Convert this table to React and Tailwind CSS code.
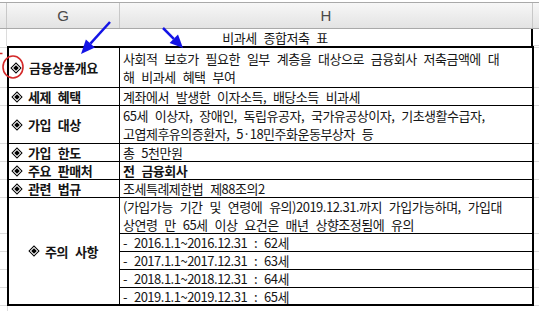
// Excel-style sheet: 비과세 종합저축 표
const GRID = 'border-[#dcdcdc]';

const rows = [
    { label: '금융상품개요', tight: true, h: 'h-[40px]', lines: ['사회적 보호가 필요한 일부 계층을 대상으로 금융회사 저축금액에 대', '해 비과세 혜택 부여'] },
    { label: '세제 혜택', h: 'h-[18px]', lines: ['계좌에서 발생한 이자소득, 배당소득 비과세'] },
    { label: '가입 대상', h: 'h-[38px]', lines: ['65세 이상자, 장애인, 독립유공자, 국가유공상이자, 기초생활수급자,', '고엽제후유의증환자, 5·18민주화운동부상자 등'] },
    { label: '가입 한도', h: 'h-[18px]', lines: ['총 5천만원'] },
    { label: '주요 판매처', h: 'h-[18px]', lines: ['전 금융회사'], bold: true },
    { label: '관련 법규', h: 'h-[18px]', lines: ['조세특례제한법 제88조의2'] },
];

const notes = [
    '- 2016.1.1~2016.12.31 : 62세',
    '- 2017.1.1~2017.12.31 : 63세',
    '- 2018.1.1~2018.12.31 : 64세',
    '- 2019.1.1~2019.12.31 : 65세',
];

const stripHeights = ['h-[2px]', 'h-[40px]', 'h-[18px]', 'h-[38px]', 'h-[18px]', 'h-[18px]', 'h-[18px]', 'h-[36px]', 'h-[18px]', 'h-[18px]', 'h-[18px]', 'h-[18px]'];

const Strip = () => (
    <div className="flex flex-col">
        {stripHeights.map((h, i) => (
            <div key={i} className={`${h} border-b ${GRID}`} />
        ))}
    </div>
);

// ◈ bullet as a CSS shape: outlined diamond with a filled centre
const Bullet = ({ className = '' }) => (
    <span className={`inline-flex shrink-0 items-center justify-center w-[8px] h-[8px] rotate-45 border-[1.5px] border-black ${className}`}>
        <span className="w-[3.5px] h-[3.5px] bg-black" />
    </span>
);

const Arrows = () => (
    <svg className="absolute inset-0 pointer-events-none" width="539" height="311" viewBox="0 0 539 311">
        <line x1="110" y1="22" x2="90.4" y2="43.6" stroke="#1414e6" strokeWidth="2.5" />
        <polygon points="81,54 94.9,47.6 85.9,39.6" fill="#1414e6" />
        <line x1="163" y1="28" x2="173.8" y2="38.8" stroke="#1414e6" strokeWidth="2.5" />
        <polygon points="183,48 178,34.6 169.6,43" fill="#1414e6" />
        <ellipse cx="13" cy="67" rx="10" ry="11" fill="none" stroke="#d42a2a" strokeWidth="1.6" />
        <line x1="0" y1="53.5" x2="2.5" y2="53.5" stroke="#d42a2a" strokeWidth="1.5" />
    </svg>
);

export default function App() {
    return (
        <div className="relative w-[539px] h-[311px] overflow-hidden bg-white text-[13px] leading-[17px] tracking-[-0.5px] [word-spacing:4.5px] text-[#151515] font-['Noto_Sans_CJK_KR','Liberation_Sans',sans-serif]">
            <div className="h-[2px]" />

            {/* column header */}
            <div className="flex h-[27px] border-y border-[#a9a9a9] bg-gradient-to-b from-[#f7f7f7] to-[#e3e3e3] font-['Liberation_Sans',sans-serif] text-[15px] tracking-normal text-[#4a4a4a]">
                <div className="w-[7px] border-r border-[#c8c8c8]" />
                <div className="w-[113px] border-r border-[#c8c8c8] flex items-center justify-center">G</div>
                <div className="w-[413px] border-r border-[#c8c8c8] flex items-center justify-center">H</div>
                <div className="flex-1" />
            </div>

            {/* title row */}
            <div className="flex h-[17px]">
                <div className={`w-[7px] border-r ${GRID}`} />
                <div className="w-[526px] border-r-2 border-black flex items-center justify-center pl-[12px] whitespace-nowrap">
                    비과세 종합저축 표
                </div>
                <div className={`flex-1 border-b ${GRID}`} />
            </div>

            <div className="flex">
                <div className="w-[7px]"><Strip /></div>

                <div className="w-[527px] border-2 border-black flex flex-col">
                    {rows.map((r, i) => (
                        <div key={i} className={`flex ${r.h} border-b border-black`}>
                            <div className="w-[111px] border-r border-black flex items-center font-bold whitespace-nowrap">
                                <Bullet className={r.tight ? 'ml-[3px] mr-[9px]' : 'ml-[4px] mr-[7px]'} />
                                {r.label}
                            </div>
                            <div className={`flex-1 flex flex-col justify-center pl-[3px] whitespace-nowrap ${r.bold ? 'font-bold' : ''}`}>
                                {r.lines.map((l, j) => (
                                    <div key={j} className={r.lines.length > 1 ? 'leading-[18px]' : ''}>{l}</div>
                                ))}
                            </div>
                        </div>
                    ))}

                    {/* 주의 사항 */}
                    <div className="flex h-[106px]">
                        <div className="w-[111px] border-r border-black flex items-center justify-center font-bold whitespace-nowrap">
                            <Bullet className="mr-[7px]" />
                            주의 사항
                        </div>
                        <div className="flex-1 flex flex-col">
                            <div className="h-[36px] border-b border-black flex flex-col justify-center pl-[3px] whitespace-nowrap leading-[18px]">
                                <div>(가입가능 기간 및 연령에 유의)2019.12.31.까지 가입가능하며, 가입대</div>
                                <div>상연령 만 65세 이상 요건은 매년 상향조정됨에 유의</div>
                            </div>
                            {notes.map((n, i) => (
                                <div
                                    key={i}
                                    className={`${i === notes.length - 1 ? 'h-[16px]' : 'h-[18px] border-b border-black'} flex items-center pl-[3px] whitespace-nowrap`}
                                >
                                    {n}
                                </div>
                            ))}
                        </div>
                    </div>
                </div>

                <div className="flex-1"><Strip /></div>
            </div>

            <div className={`h-[6px] w-[8px] border-r ${GRID}`} />

            <Arrows />
        </div>
    );
}
